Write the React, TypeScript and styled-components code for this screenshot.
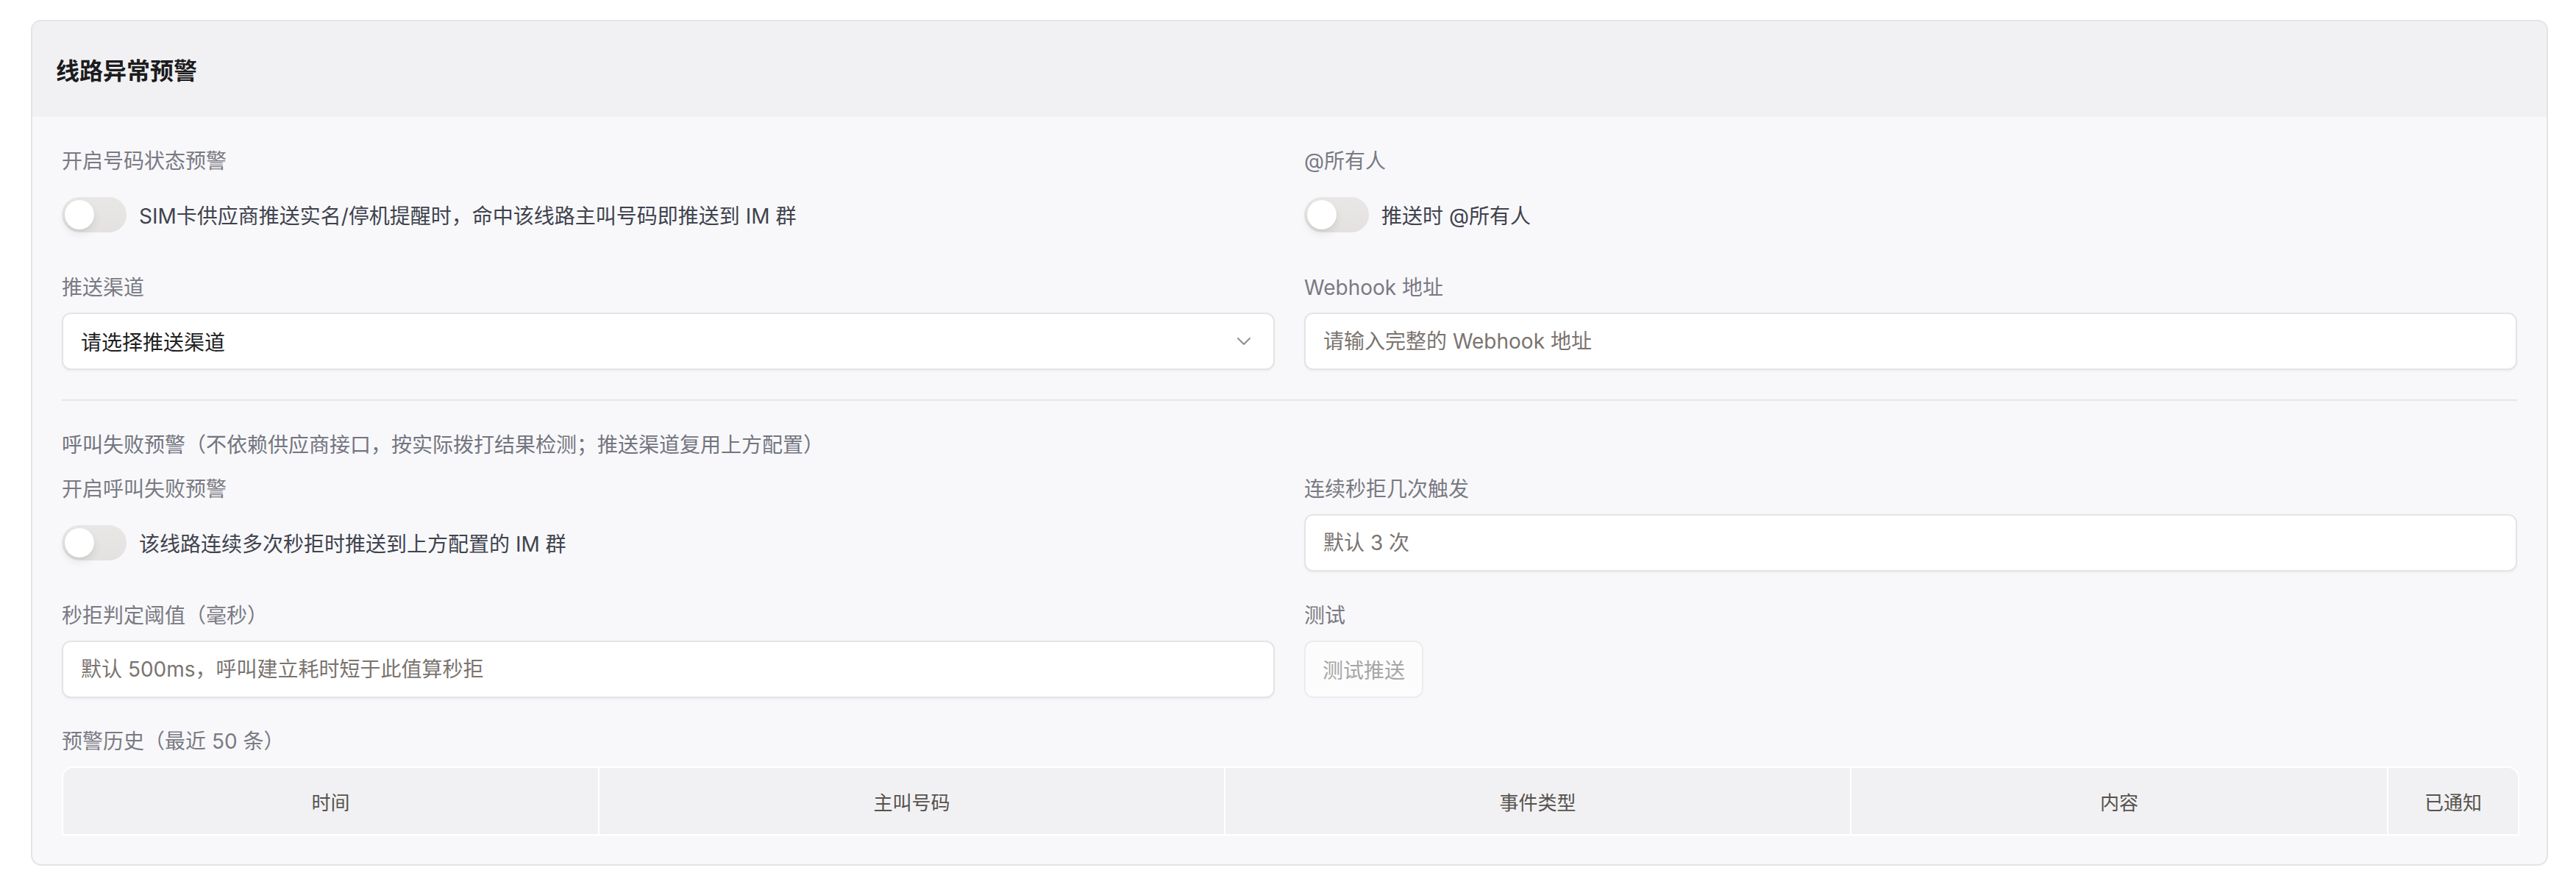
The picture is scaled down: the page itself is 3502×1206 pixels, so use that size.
import React from "react";
import styled, { createGlobalStyle } from "styled-components";

const GlobalStyle = createGlobalStyle`
  * {
    box-sizing: border-box;
  }
  body {
    margin: 0;
    background: #ffffff;
    font-family: "Inter", "Noto Sans CJK SC", sans-serif;
  }
`;

const Page = styled.div`
  padding: 27px 38px 28px 42px;
`;

const Card = styled.section`
  border: 2px solid #e4e4e7;
  border-radius: 14px;
  background: #f8f8fa;
  overflow: hidden;
`;

const CardHeader = styled.header`
  height: 130px;
  display: flex;
  align-items: center;
  padding: 0 32px;
  background: #f1f1f3;
`;

const Title = styled.h2`
  margin: 0;
  font-size: 32px;
  font-weight: 700;
  color: #1c1c1e;
`;

const CardBody = styled.div`
  padding: 40px 40px 39px;
`;

const FieldGrid = styled.div`
  display: grid;
  grid-template-columns: 1fr 1fr;
  column-gap: 40px;
  row-gap: 40px;
`;

const Field = styled.div<{ $spaced?: boolean }>`
  display: flex;
  flex-direction: column;
  gap: 14px;
  margin-top: ${(p) => (p.$spaced ? "39px" : "0")};
`;

const Label = styled.div`
  font-size: 28px;
  line-height: 40px;
  color: #7a7a84;
`;

const SectionNote = styled.div`
  font-size: 28px;
  line-height: 40px;
  color: #737580;
  margin-bottom: 20px;
`;

const Divider = styled.hr`
  margin: 40px 0 40px;
  border: none;
  height: 2px;
  background: #e6e6e9;
`;

const SwitchRow = styled.label`
  height: 78px;
  display: flex;
  align-items: center;
  gap: 17px;
  font-size: 28px;
  color: #40434e;
`;

const SwitchTrack = styled.span<{ $on?: boolean }>`
  position: relative;
  flex: none;
  width: 88px;
  height: 48px;
  border-radius: 24px;
  background: ${(p) => (p.$on ? "#4f7cff" : "linear-gradient(180deg, #e8e7e6, #e3e2e1)")};
`;

const SwitchKnob = styled.span<{ $on?: boolean }>`
  position: absolute;
  top: 4px;
  left: ${(p) => (p.$on ? "44px" : "4px")};
  width: 40px;
  height: 40px;
  border-radius: 50%;
  background: #ffffff;
  box-shadow: 0 6px 12px rgba(0, 0, 0, 0.08), 0 1px 2px rgba(0, 0, 0, 0.08);
`;

const SelectBox = styled.div`
  height: 78px;
  display: flex;
  align-items: center;
  justify-content: space-between;
  padding: 0 30px 0 24px;
  border: 2px solid #e4e4e6;
  border-radius: 12px;
  background: #ffffff;
  box-shadow: 0 2px 3px rgba(0, 0, 0, 0.04);
  font-size: 28px;
  color: #1f1f1f;
`;

const TextInput = styled.input`
  height: 78px;
  width: 100%;
  padding: 0 24px;
  border: 2px solid #e4e4e6;
  border-radius: 12px;
  background: #ffffff;
  box-shadow: 0 2px 3px rgba(0, 0, 0, 0.04);
  font-family: inherit;
  font-size: 28px;
  color: #1f1f1f;
  outline: none;

  &::placeholder {
    color: #7a7470;
  }
`;

const TestButton = styled.button`
  align-self: flex-start;
  height: 78px;
  padding: 0 23px;
  border: 2px solid #ececee;
  border-radius: 12px;
  background: #fcfcfd;
  font-family: inherit;
  font-size: 28px;
  color: #a6a6a6;
`;

const HistoryTable = styled.table`
  width: 100%;
  table-layout: fixed;
  border-collapse: separate;
  border-spacing: 0;
  border: 2px solid #ffffff;
  border-radius: 16px 16px 0 0;
  overflow: hidden;
`;

const HeadCell = styled.th<{ $width: number }>`
  width: ${(p) => p.$width}px;
  height: 90px;
  padding: 0;
  background: #f1f1f3;
  border-left: 2px solid #ffffff;
  font-size: 26px;
  font-weight: 400;
  color: #57524d;
  text-align: center;

  &:first-child {
    border-left: none;
  }
`;

const Chevron = () => (
  <svg width="20" height="12" viewBox="0 0 20 12" fill="none">
    <polyline points="2,2 10,10 18,2" stroke="#8d8d8d" strokeWidth="2" strokeLinecap="round" strokeLinejoin="round" />
  </svg>
);

const Switch: React.FC<{ on?: boolean; text: string }> = ({ on, text }) => (
  <SwitchRow>
    <SwitchTrack $on={on}>
      <SwitchKnob $on={on} />
    </SwitchTrack>
    {text}
  </SwitchRow>
);

const columns = [
  { title: "时间", width: 727 },
  { title: "主叫号码", width: 851 },
  { title: "事件类型", width: 851 },
  { title: "内容", width: 730 },
  { title: "已通知", width: 178 },
];

export default function App() {
  return (
    <Page>
      <GlobalStyle />
      <Card>
        <CardHeader>
          <Title>线路异常预警</Title>
        </CardHeader>
        <CardBody>
          <FieldGrid>
            <Field>
              <Label>开启号码状态预警</Label>
              <Switch text="SIM卡供应商推送实名/停机提醒时，命中该线路主叫号码即推送到 IM 群" />
            </Field>
            <Field>
              <Label>@所有人</Label>
              <Switch text="推送时 @所有人" />
            </Field>
            <Field>
              <Label>推送渠道</Label>
              <SelectBox>
                <span>请选择推送渠道</span>
                <Chevron />
              </SelectBox>
            </Field>
            <Field>
              <Label>Webhook 地址</Label>
              <TextInput placeholder="请输入完整的 Webhook 地址" />
            </Field>
          </FieldGrid>

          <Divider />

          <SectionNote>呼叫失败预警（不依赖供应商接口，按实际拨打结果检测；推送渠道复用上方配置）</SectionNote>
          <FieldGrid>
            <Field>
              <Label>开启呼叫失败预警</Label>
              <Switch text="该线路连续多次秒拒时推送到上方配置的 IM 群" />
            </Field>
            <Field>
              <Label>连续秒拒几次触发</Label>
              <TextInput placeholder="默认 3 次" />
            </Field>
            <Field>
              <Label>秒拒判定阈值（毫秒）</Label>
              <TextInput placeholder="默认 500ms，呼叫建立耗时短于此值算秒拒" />
            </Field>
            <Field>
              <Label>测试</Label>
              <TestButton>测试推送</TestButton>
            </Field>
          </FieldGrid>

          <Field $spaced>
            <Label>预警历史（最近 50 条）</Label>
            <HistoryTable>
              <thead>
                <tr>
                  {columns.map((c) => (
                    <HeadCell key={c.title} $width={c.width}>
                      {c.title}
                    </HeadCell>
                  ))}
                </tr>
              </thead>
            </HistoryTable>
          </Field>
        </CardBody>
      </Card>
    </Page>
  );
}
